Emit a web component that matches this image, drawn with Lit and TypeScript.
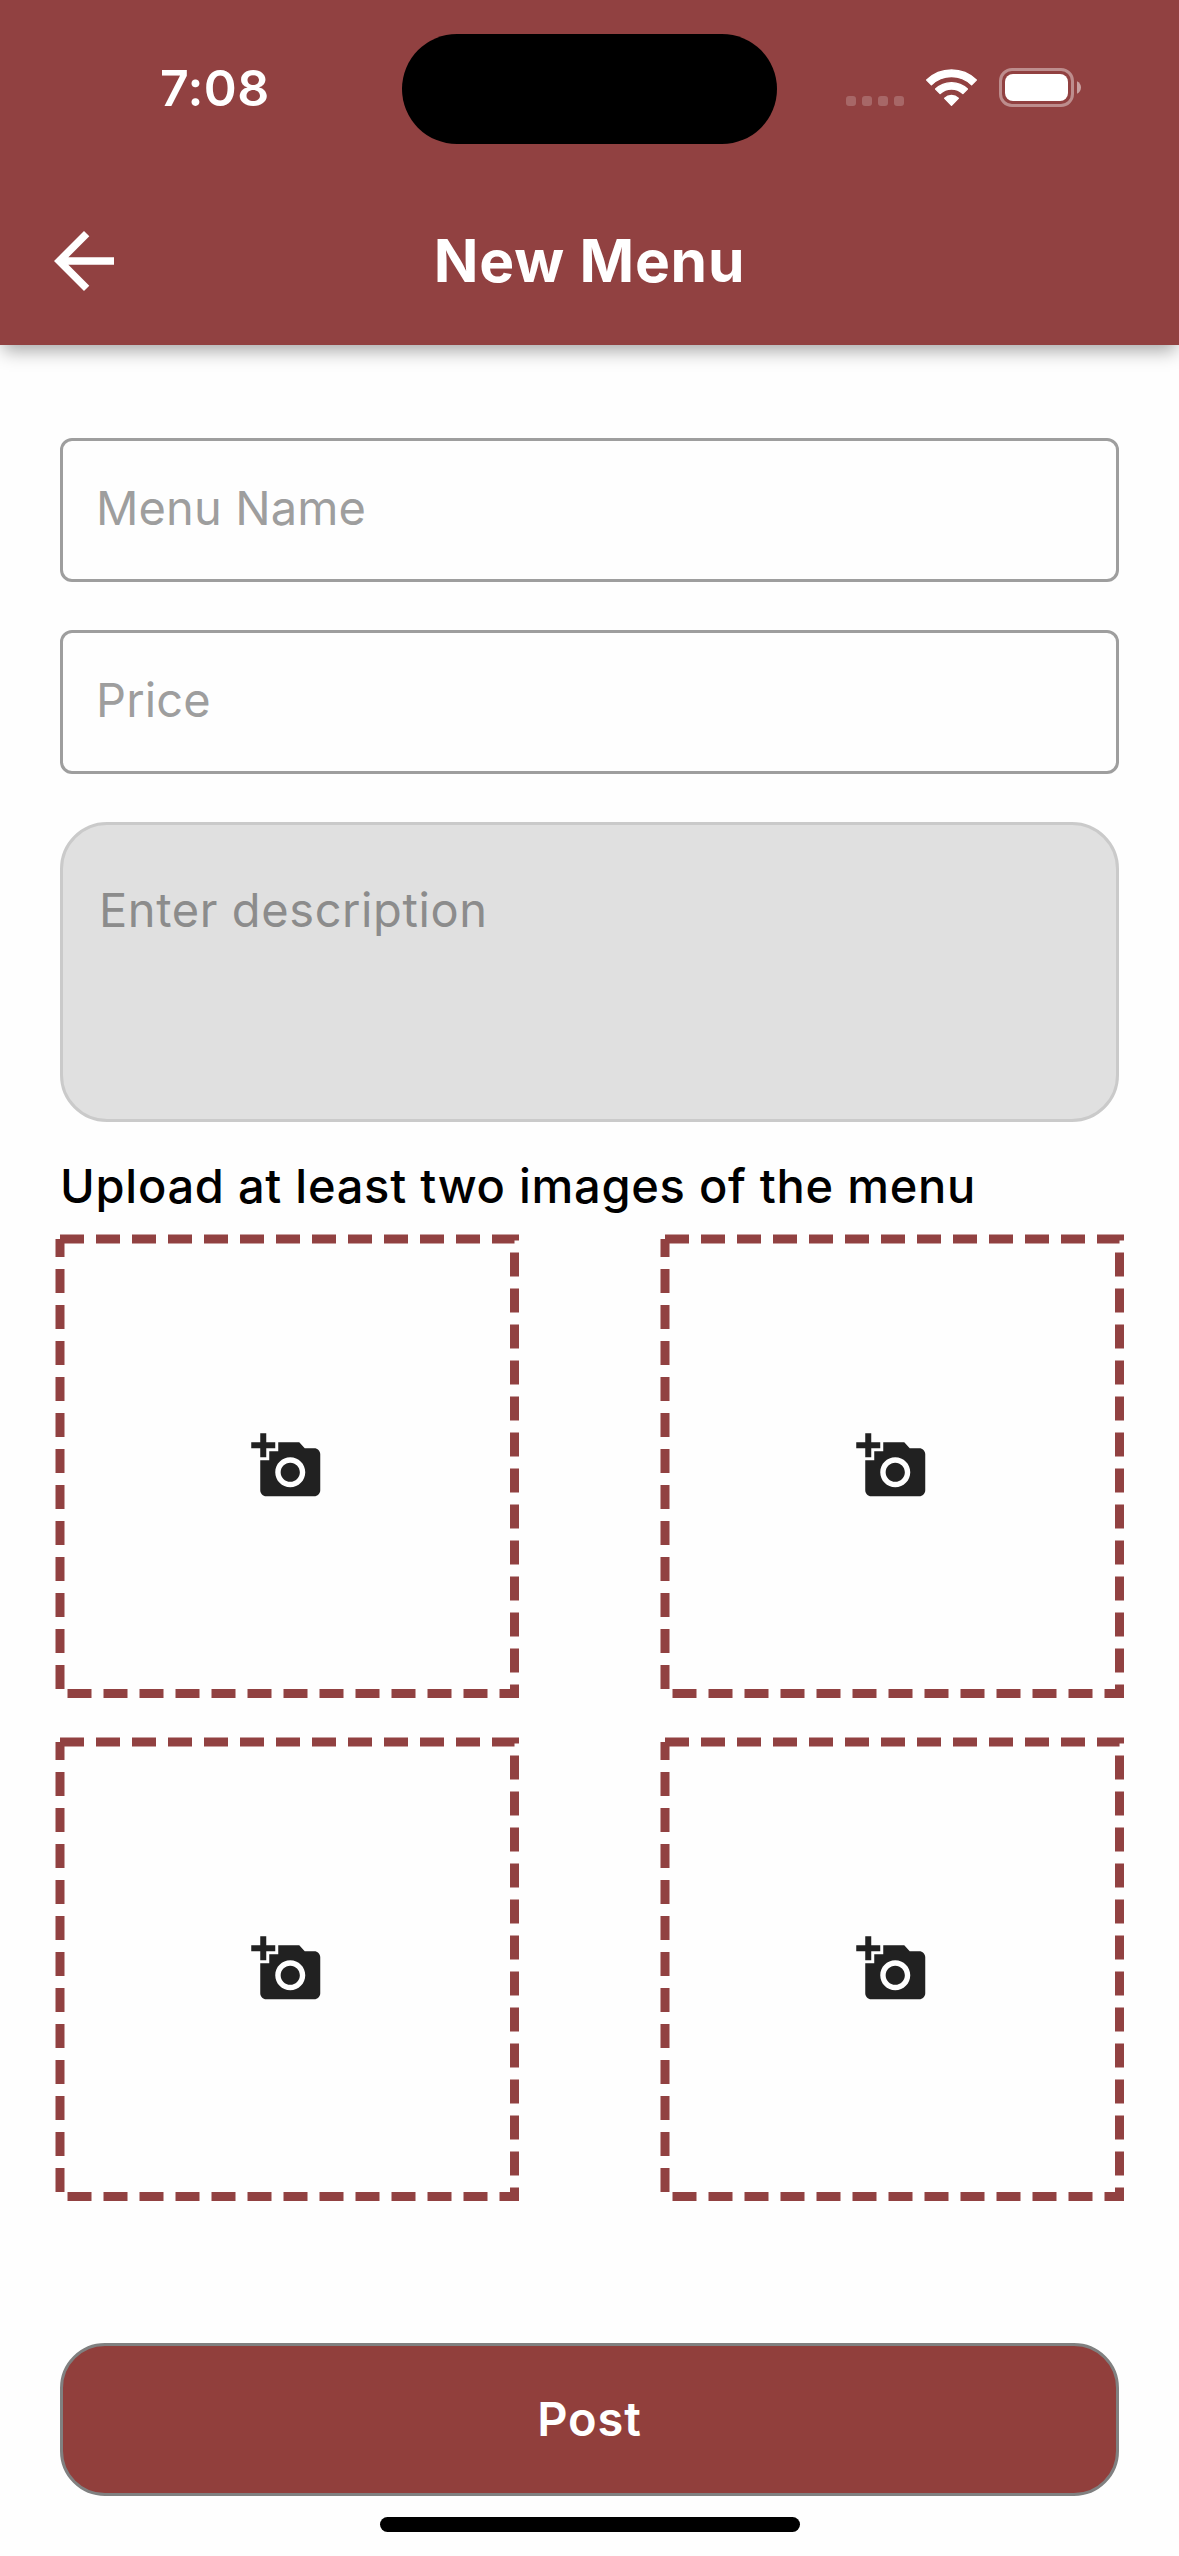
import { LitElement, html, css, svg } from "lit";
import { customElement, property } from "lit/decorators.js";

/** Square drop zone with a dashed outline and an add-photo icon. */
@customElement("photo-slot")
class PhotoSlot extends LitElement {
  static styles = css`
    :host { display: block; width: 454px; height: 454px; }
    .slot { display: block; width: 100%; height: 100%; overflow: visible; }
    .outline { fill: none; stroke: #914141; stroke-width: 9; stroke-dasharray: 24 12; }
    .camera { fill: #212121; }
  `;

  render() {
    return html`
      <svg class="slot" viewBox="0 0 454 454" role="img">
        <path class="outline" d="M0 0H454.5V454.5H0V0" />
        <path
          class="camera"
          transform="translate(191.25 191.25) scale(3)"
          d="M3 4V1h2v3h3v2H5v3H3V6H0V4h3zm3 6V7h3V4h7l1.83 2H21c1.1 0 2 .9 2 2v12c0 1.1-.9 2-2 2H5c-1.1 0-2-.9-2-2V10h3zm7 9c2.76 0 5-2.24 5-5s-2.24-5-5-5-5 2.24-5 5 2.24 5 5 5zm-3.2-5c0 1.77 1.43 3.2 3.2 3.2s3.2-1.43 3.2-3.2-1.43-3.2-3.2-3.2-3.2 1.43-3.2 3.2z"
        />
      </svg>
    `;
  }
}

/** Signal dots, Wi-Fi and battery. */
@customElement("status-icons")
class StatusIcons extends LitElement {
  static styles = css`
    :host { display: flex; }
    .icons { display: block; }
    .wifi { stroke: #fff; stroke-width: 1.4; stroke-linejoin: round; }
  `;

  render() {
    const dots = [0, 16, 32, 48];
    return html`
      <svg class="icons" width="236" height="40" viewBox="0 0 236 40" fill="#fff">
        ${dots.map((x) => svg`<rect x=${x} y="28" width="10" height="10" rx="3" opacity="0.2" />`)}
        <g class="wifi">
          <path d="M80.700 12.100A35.500 35.500 0 0 1 130.300 12.100L125.600 16.800A28.900 28.900 0 0 0 85.400 16.800Z" />
          <path d="M89.600 21.100A22.800 22.800 0 0 1 121.400 21.100L116.900 25.500A16.600 16.600 0 0 0 94.100 25.500Z" />
          <path d="M98.700 30.200A9.900 9.900 0 0 1 112.300 30.200L105.500 37.200Z" />
        </g>
        <rect x="154.500" y="1.500" width="72" height="36" rx="11.500" fill="none" stroke="#fff" stroke-width="3" opacity="0.4" />
        <rect x="159" y="6" width="63" height="27" rx="8" />
        <path d="M231 13.300c2.400 1 4 3.500 4 6.200s-1.600 5.200-4 6.200z" opacity="0.5" />
      </svg>
    `;
  }
}

@customElement("text-field")
class TextField extends LitElement {
  @property() label = "";
  @property({ type: Boolean, reflect: true }) multiline = false;

  static styles = css`
    :host {
      display: block;
      box-sizing: border-box;
      height: 144px;
      padding: 37px 33px 0;
      border: 3px solid #9e9e9e;
      border-radius: 12px;
      color: #9e9e9e;
      letter-spacing: 0.12px;
    }
    :host([multiline]) {
      height: 300px;
      padding: 55px 36px 0;
      border-color: #cacaca;
      border-radius: 47px;
      background: #e0e0e0;
      color: #8c8c8c;
      letter-spacing: 0.6px;
    }
    .label { display: block; font-size: 47px; line-height: 60px; }
  `;

  render() {
    return html`<span class="label">${this.label}</span>`;
  }
}

@customElement("app-root")
class AppRoot extends LitElement {
  static styles = css`
    :host {
      display: flex;
      flex-direction: column;
      width: 1179px;
      height: 2556px;
      overflow: hidden;
      background: #fefefe;
      color: #000;
      font-family: Inter, "Liberation Sans", sans-serif;
    }
    .header {
      height: 345px;
      flex: none;
      background: #914141;
      color: #fff;
      box-shadow: 0 9px 17px -3px rgba(0, 0, 0, 0.34);
    }
    .status {
      display: grid;
      grid-template-columns: 402px 375px 1fr;
      height: 177px;
      align-items: start;
    }
    .time {
      padding: 58px 0 0 160px;
      font-size: 50px;
      font-weight: 600;
      line-height: 60px;
      letter-spacing: 0.4px;
    }
    .island { height: 110px; margin-top: 34px; border-radius: 55px; background: #000; }
    .signals { padding: 68px 0 0 69px; }
    .bar {
      display: grid;
      grid-template-columns: 129px 1fr 129px;
      height: 168px;
      align-items: center;
    }
    .back { display: block; width: 90px; height: 90px; margin-left: 39px; fill: #fff; }
    .title {
      margin: 0;
      text-align: center;
      font-size: 58.700px;
      font-weight: 700;
      line-height: 72px;
      letter-spacing: 0.75px;
    }
    .form { display: flex; flex-direction: column; padding: 93px 60px 0; }
    .fields { display: flex; flex-direction: column; gap: 48px; }
    .hint {
      margin: 34px 0 0;
      font-size: 47px;
      line-height: 60px;
      font-weight: 500;
      letter-spacing: 0.73px;
    }
    .photos {
      display: grid;
      grid-template-columns: 454px 454px;
      column-gap: 151px;
      row-gap: 49px;
      margin-top: 23px;
    }
    .footer {
      display: flex;
      flex-direction: column;
      align-items: center;
      margin-top: auto;
      padding: 0 60px 24px;
    }
    .post {
      box-sizing: border-box;
      width: 100%;
      height: 153px;
      margin: 0 0 21px;
      padding: 0 0 2px;
      border: 3px solid #808080;
      border-radius: 45px;
      background: #913f3c;
      color: #fff;
      font-family: inherit;
      font-size: 47px;
      font-weight: 600;
      line-height: 60px;
      letter-spacing: 0.9px;
    }
    .home { width: 420px; height: 15px; border-radius: 8px; background: #000; }
  `;

  render() {
    return html`
      <header class="header">
        <div class="status">
          <div class="time">7:08</div>
          <div class="island"></div>
          <div class="signals"><status-icons></status-icons></div>
        </div>
        <div class="bar">
          <svg class="back" viewBox="0 0 24 24">
            <path d="M20 11H7.83l5.59-5.59L12 4l-8 8 8 8 1.410-1.410L7.830 13H20v-2z" />
          </svg>
          <h1 class="title">New Menu</h1>
        </div>
      </header>
      <main class="form">
        <div class="fields">
          <text-field label="Menu Name"></text-field>
          <text-field label="Price"></text-field>
          <text-field label="Enter description" multiline></text-field>
        </div>
        <p class="hint">Upload at least two images of the menu</p>
        <div class="photos">
          ${[1, 2, 3, 4].map(() => html`<photo-slot></photo-slot>`)}
        </div>
      </main>
      <footer class="footer">
        <button class="post">Post</button>
        <div class="home"></div>
      </footer>
    `;
  }
}
